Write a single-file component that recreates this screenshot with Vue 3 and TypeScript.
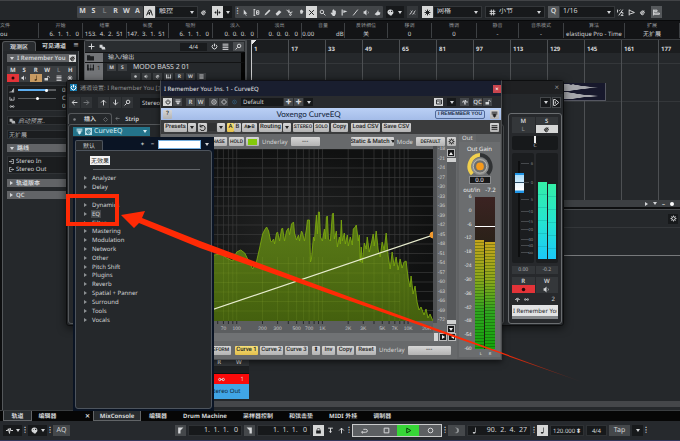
<script setup lang="ts">
import { h } from 'vue'

type IconDef = { d: string; solid?: boolean }

const icons: Record<string, IconDef> = {
  auto: { d: 'M1 11 5 2h3l3 9M3 8l6-4M6 6v4' },
  edit: { d: 'M3 7h6V5.500A3.200 3.200 0 1 0 8 9M4 7l5-4' },
  snap: { d: 'M6 1v10M1 6h3M8 6h3M3 4v4M9 4v4' },
  cursor: { d: 'M3 1v9l2-2 2 4 1-1-2-3h3z', solid: true },
  range: { d: 'M2 1v10M1 1h3M1 11h3M6 3h4v6H6zM8 5v2' },
  pen: { d: 'M1 11l1-3 7-7 2 2-7 7z', solid: true },
  erase: { d: 'M1 8l6-6 4 3-6 6H3z', solid: true },
  scissors: { d: 'M1 2l8 5M5 1v6M9 9.500a1.500 1.500 0 1 0-3 0 1.500 1.500 0 1 0 3 0M8 6l3-1' },
  glue: { d: 'M1 11l5-6M5 3l3-2 3 3-2 4H6z', solid: true },
  cross: { d: 'M2 2l8 8M10 2l-8 8' },
  zoom: { d: 'M8 5a3 3 0 1 0-6 0 3 3 0 1 0 6 0M7.500 7.500 11 11' },
  search: { d: 'M10 5a3 3 0 1 0-6 0 3 3 0 1 0 6 0M4.500 7.500 1 11' },
  hand: { d: 'M2 6l2 1V2h1V1h2v1h1v1h2v5l-2 4H5L1 7z', solid: true },
  comp: { d: 'M1 1h2v10H1zM4 2l7 2-7 3z', solid: true },
  line: { d: 'M2 11 10 1' },
  speaker: { d: 'M1 4h2l3-3v10L3 8H1zM8 4l1 2-1 2v1l2-3-2-3z', solid: true },
  hit: { d: 'M1 9l5-5 1-3 1 4 3 1-1 4-5 1zM2 3l3 3', solid: true },
  palette: { d: 'M6 1C2 1 0 4 1 7s4 2 4 4h3c0-2 3-2 3-5S9 1 6 1M4 4h1v1H4M7 3h2v2H7', solid: true },
  wave: { d: 'M1 9c3 0 3-6 5-6M6 9c3 0 3-6 5-6M3 3l1 1M9 8l1 1' },
  star: { d: 'M6 1v10M1 6h10M2.500 2.500l7 7M9.500 2.500l-7 7' },
  grid: { d: 'M4 1v10M8 1v10M1 4h10M1 8h10' },
  half: { d: 'M1 1v5M4 3l2-2M10 1 3 11M7 6h3v2L7 11h4' },
  flag: { d: 'M2 1v10M2 2l9 4-9 3' },
  bars: { d: 'M1 1v10M2 2h5v2H2zM2 7h9v2H2z' },
  rec: { d: 'M9 6a3 3 0 1 0-6 0 3 3 0 1 0 6 0', solid: true },
  note: { d: 'M7 1h1v8c0 3-5 3-5 1 0-1 2-2 4-1z', solid: true },
  lock: { d: 'M2 6h8v5H2zM3 6V4q3-5 6 0v2H8V4Q6 1 4 4v2z', solid: true },
  unlock: { d: 'M1 6h7v5H1zM6 6V4q2-5 5 0v2h-1V4Q9 2 7 4v2z', solid: true },
  list: { d: 'M1 2h10M1 5h10M1 8h10M1 11h10' },
  menu: { d: 'M1 3h10M1 6h10M1 9h10' },
  power: { d: 'M6 1v5M3.500 3A4 4 0 1 0 8.500 3' },
  bypass: { d: 'M1 2h10M1 5h10M4 5v4h4V5M6 5v6' },
  ring: { d: 'M10 6a4 4 0 1 0-8 0 4 4 0 1 0 8 0' },
  dotring: { d: 'M10.500 6a4.500 4.500 0 1 0-9 0 4.500 4.500 0 1 0 9 0M6 4v4' },
  diamond: { d: 'M6 1l5 5-5 5-5-5z' },
  plus: { d: 'M6 1v10M1 6h10' },
  left: { d: 'M11 6H2M6 2 2 6l4 4' },
  right: { d: 'M1 6h9M6 2l4 4-4 4' },
  up: { d: 'M6 11V2M2 6l4-4 4 4' },
  down: { d: 'M6 1v9M2 6l4 4 4-4' },
  folder: { d: 'M0 2h5l1 2h6v7H0z', solid: true },
  keys: { d: 'M0 1h12v10H0zM3 1v6h1v4h1V7h1V1M7 1v6h1v4h1V7h1V1', solid: true },
  group: { d: 'M1 3h5v3l4 1 1 4H5L4 8H1z', solid: true },
  gear: { d: 'M9 6a3 3 0 1 0-6 0 3 3 0 1 0 6 0M6 1v2M6 9v2M1 6h2M9 6h2M2.500 2.500l1.500 1.500M8 8l1.500 1.500M9.500 2.500 8 4M4 8 2.500 9.500' },
  loop: { d: 'M1 9h7a3 2.500 0 0 0 0-5H4M3 7 1 9l2 2' },
  square: { d: 'M2 2h8v8H2z' },
  play: { d: 'M3 2l7 4-7 4z' },
  vol: { d: 'M0 11h2V9H0zM3 11h2V7H3zM6 11h2V4H6zM9 11h2V1H9z', solid: true },
  pan: { d: 'M1 2v8h10V2M5 6v4' },
  link: { d: 'M5 6a2 2 0 1 0-4 0 2 2 0 1 0 4 0M11 6a2 2 0 1 0-4 0 2 2 0 1 0 4 0M4 6h4' },
  in: { d: 'M6 1h5v10H6M0 6h7M5 4l2 2-2 2' },
  out: { d: 'M6 1H1v10h5M4 6h7M9 4l2 2-2 2' },
  pulse: { d: 'M0 6h3l1-3 2 8 1-9 1 4h4' },
  marker: { d: 'M2 1h9L6 6v5H2z', solid: true },
  tee: { d: 'M2 2h8M6 2v8M4 8h4' },
  moon: { d: 'M3 1q9 0 7 7-3 4-8 2 5 0 5-4T3 1', solid: true },
  cam: { d: 'M1 2h10v8H1zM3 5h2M7 4l2 2-2 2' },
  undo: { d: 'M2 1v4h4M2 5a4.500 4.500 0 1 1 0 4' },
  exit: { d: 'M1 1h3l6 5-6 5H1zM4 4v4' },
}

const Icon = (props: { name: string }) => {
  const i = icons[props.name]
  return h('svg', { class: 'icon', viewBox: '0 0 12 12', 'aria-hidden': 'true' }, [
    h('path', {
      d: i.d,
      fill: i.solid ? 'currentColor' : 'none',
      stroke: i.solid ? 'none' : 'currentColor',
      'stroke-width': 1.7,
      'fill-rule': 'evenodd',
    }),
  ])
}
Icon.props = ['name']

const states = ['M', 'S', 'L', 'R', 'W', 'A']
const tools = ['cursor', 'range', 'pen', 'erase', 'scissors', 'glue', 'cross', 'zoom', 'hand', 'comp', 'line', 'speaker', 'hit']
const info = [
  ['文件', 'ou', 'start'], ['开始', '6.  1.  1.   0', 'end'], ['结束', '153.  4.  2.  51', 'end'],
  ['长度', '147.  3.  1.  51', 'end'], ['吸附', '6.  1.  1.   0', 'end'], ['淡入', '0.  0.  0.   0', 'end'],
  ['淡出', '0.  0.  0.   0', 'end'], ['音量', '0.00              dB', ''], ['反转相位', '关', ''], ['移调', '0', ''],
  ['微调', '0', ''], ['静音', '-', ''], ['音乐模式', '-', ''], ['算法', 'elastique Pro - Time', ''], ['扩展', '无扩展', ''],
]
const bars = Array.from({ length: 12 }, (_, i) => 1 + i * 16)
const categories = ['Analyzer', 'Delay', '', 'Dynamics', 'EQ', 'Filter', 'Mastering', 'Modulation', 'Network', 'Other',
  'Pitch Shift', 'Plugins', 'Reverb', 'Spatial + Panner', 'Surround', 'Tools', 'Vocals']

// Graph space: 273 x 172, log frequency on x, 3 dB rows on y
const freqX = (f: number) => 76 + 86 * Math.log10(f / 100)
const freqs = [20, 30, 40, 50, 60, 70, 80, 90, 100, 200, 300, 400, 500, 600, 700, 800, 900,
  1000, 2000, 3000, 4000, 5000, 6000, 7000, 8000, 9000, 10000, 20000]
const freqLabels = [[70, '70'], [100, '100'], [200, '200'], [300, '300'], [500, '500'], [700, '700'], [1000, '1K'],
  [2000, '2K'], [3000, '3K'], [5000, '5K'], [7000, '7K'], [10000, '10K'], [16500, '20K']] as [number, string][]
const dbs = Array.from({ length: 19 }, (_, i) => -18 - i * 3)
const spectrum = [
  [0, 110], [53, 106], [60, 105], [66, 109], [72, 112], [76, 103], [80, 101], [84, 104], [88, 112], [92, 120], [96, 112],
  [99, 99], [102, 85], [104, 81], [106, 78], [108, 82], [110, 92], [111, 93], [113, 90], [114, 95], [116, 84], [117, 83],
  [119, 92], [121, 80], [122, 79], [124, 92], [126, 82], [128, 79], [129, 86], [131, 75], [133, 73], [134, 84], [136, 91],
  [138, 86], [139, 92], [141, 82], [142, 84], [144, 92], [146, 80], [147, 71], [149, 71], [150, 113], [151, 110], [153, 88],
  [154, 92], [156, 66], [157, 85], [158, 63], [159, 63], [160, 88], [162, 92], [164, 80], [165, 90], [166, 68], [167, 67],
  [168, 90], [170, 92], [172, 65], [173, 64], [174, 90], [176, 82], [177, 98], [179, 88], [180, 95], [181, 71], [182, 92],
  [184, 84], [185, 95], [187, 86], [188, 97], [190, 88], [192, 96], [193, 80], [195, 78], [196, 76], [198, 92], [199, 86],
  [200, 113], [201, 98], [202, 114], [204, 94], [206, 100], [207, 88], [209, 103], [211, 95], [213, 85], [214, 97],
  [216, 82], [218, 101], [220, 108], [222, 93], [224, 101], [226, 84], [228, 107], [230, 120], [232, 103], [234, 117],
  [236, 108], [238, 121], [240, 110], [242, 119], [244, 113], [246, 112], [248, 129], [250, 138], [251, 127], [253, 145],
  [255, 137], [257, 153], [259, 161], [261, 158], [264, 166], [266, 160], [268, 169], [270, 165], [273, 172],
]
const spectrumLine = spectrum.map(([x, y]) => `${x},${y}`).join(' ')
const outScale = [6, 0, -6, -12, -18, -24, -30, -36, -42, -48, -54, -60]
const faderScale = [['6', 10], ['0', 29], ['5', 46], ['10', 58], ['15', 68], ['20', 76], ['30', 86], ['40', 92], ['oo', 99]] as [string, number][]
const lowerTabs = ['MixConsole', '编辑器', 'Drum Machine', '采样器控制', '和弦击垫', 'MIDI 外挂', '调制器']
</script>

<template>
  <div class="app">
    <header class="toolbar">
      <div class="cluster letters">
        <button v-for="s in states" :key="s" :class="{ dim: s === 'L' }">{{ s }}</button>
      </div>
      <div class="join">
        <button class="ib lit" aria-label="Automation"><Icon name="auto" /></button>
        <label class="pick w44"><select aria-label="Automation mode"><option>触控</option></select><i class="caret" /></label>
        <button class="ib" aria-label="Edit automation"><Icon name="edit" /></button>
      </div>
      <div class="join">
        <button class="ib lit" aria-label="Auto scroll"><Icon name="snap" /></button>
        <button class="ib dark" aria-label="Scroll options"><i class="caret" /></button>
      </div>
      <div class="cluster tools">
        <span class="dots">⋮</span>
        <button v-for="t in tools" :key="t" :class="{ lit: t === 'cross' }" :aria-label="t"><Icon :name="t" /></button>
      </div>
      <div class="join">
        <button class="ib dark" aria-label="Colour"><Icon name="palette" /></button>
        <button class="ib dark" aria-label="Colour menu"><i class="caret" /></button>
      </div>
      <button class="ib gapped" aria-label="Zero crossing"><Icon name="wave" /></button>
      <div class="join">
        <button class="ib lit" aria-label="Snap"><Icon name="star" /></button>
        <label class="pick w49"><select aria-label="Snap type"><option>网格</option></select><i class="caret" /></label>
      </div>
      <label class="pick w60"><Icon name="grid" /><select aria-label="Grid type"><option>小节</option></select><i class="caret" /></label>
      <div class="join">
        <button class="ib mid">Q</button>
        <label class="pick w56"><select aria-label="Quantize"><option>1/16</option></select><i class="caret" /></label>
        <button class="ib" aria-label="Iterative"><Icon name="half" /></button>
        <button class="ib" aria-label="Swing"><Icon name="flag" /></button>
        <button class="ib" aria-label="Quantize panel"><Icon name="edit" /></button>
      </div>
      <button class="ib mid" aria-label="Layout"><Icon name="bars" /></button>
    </header>

    <dl class="info">
      <div v-for="([k, v, a], i) in info" :key="i" :class="a"><dt>{{ k }}</dt><dd>{{ v }}</dd></div>
    </dl>

    <main class="main">
      <aside class="inspector">
        <nav class="itabs"><button class="on">观测区</button><button>可见通道</button><span>≡</span></nav>
        <div class="ibody">
          <div class="bar name"><i class="caret" /> I Remember You <Icon name="edit" /></div>
          <div class="pads">
            <button>M</button><button>S</button><button>R</button><button>W</button><button class="dim">L</button><button>H</button>
            <button class="red" aria-label="Record"><Icon name="rec" /></button><button aria-label="Monitor"><Icon name="speaker" /></button>
            <button class="tan" aria-label="Timebase"><Icon name="note" /></button><button aria-label="Lock"><Icon name="unlock" /></button>
            <button aria-label="Lanes"><Icon name="list" /></button><button aria-label="Freeze"><Icon name="star" /></button>
          </div>
          <div class="box">
            <label class="srow"><Icon name="vol" /><input type="range" value="78" class="blue" aria-label="Volume" /><span>0.00</span></label>
            <label class="srow"><Icon name="pan" /><input type="range" value="50" aria-label="Pan" /><span>C</span></label>
            <div class="srow"><Icon name="link" /><em /><span>0.00</span></div>
          </div>
          <div class="box one"><Icon name="group" /><i>启动预置..</i></div>
          <div class="box one">无扩展</div>
          <div class="bar"><i class="caret" /> 路线</div>
          <div class="box route">
            <p><Icon name="in" /> Stereo In</p>
            <p><Icon name="out" /> Stereo Out</p>
          </div>
          <div class="bar"><i class="caret side" /> 轨道版本</div>
          <div class="bar"><i class="caret side" /> QC</div>
        </div>
      </aside>

      <div class="work">
        <section class="arrange">
          <div class="tracks">
            <div class="thead">
              <button aria-label="Add track"><Icon name="plus" /></button>
              <button aria-label="Presets"><Icon name="group" /></button>
              <span class="sig">4/4</span>
              <button aria-label="History"><Icon name="power" /></button>
              <button aria-label="Agents"><Icon name="list" /></button>
              <button class="find" aria-label="Find"><Icon name="search" /></button>
            </div>
            <div class="track io"><span class="tic"><Icon name="folder" /></span><b>输入/输出</b></div>
            <div class="track">
              <span class="tic"><Icon name="keys" /><small>1</small></span>
              <div class="tmain">
                <div class="trow"><button>M</button><button>S</button><strong>MODO BASS 2 01</strong></div>
                <div class="trow second">
                  <button v-for="n in ['rec', 'speaker', 'edit', 'keys']" :key="n" :aria-label="n"><Icon :name="n" /></button>
                  <button>R</button><button>W</button><button aria-label="lanes"><Icon name="list" /></button>
                </div>
              </div>
            </div>
          </div>
          <div class="timeline">
            <div class="lanes">
              <div v-for="b in bars" :key="b" class="measure"><span>{{ b }}</span></div>
            </div>
            <svg class="clip" viewBox="0 0 42 18" aria-hidden="true">
              <rect width="42" height="18" fill="#555761" /><rect width="41" height="17" fill="#17182c" />
              <path d="M0 1h5l2 1 2-1 2 1 3 0 3 1 4 0 5 1 8 .500H41 34l-8 .500-5 1-4 0-4 1-3 0-4 1-3 0H0z" fill="#a5a6ab" />
              <path d="M0 9h4l3 1 3 0 3 1 3 0 4 1 6 0 8 1H41 34l-7 1-7 0-4 1-3 0-4 1-5 0H0z" fill="#a5a6ab" />
            </svg>
            <div class="hscroll"><i class="caret side" /><i class="caret" /><b>–</b><span class="knob" /></div>
          </div>
        </section>
        <section class="lower">
          <div class="lhead"><button aria-label="Settings"><Icon name="gear" /></button></div>
          <div class="lrule" />
          <div class="outstrip">
            <div class="rw"><span>R</span><span>W</span></div>
            <div class="blank" />
            <div class="redrow"><Icon name="link" /><span>1</span></div>
            <div class="bluerow">Stereo Out</div>
          </div>
          <div class="mscroll" />
        </section>
      </div>
    </main>

    <nav class="tabs">
      <button class="on first">轨道</button><button class="second">编辑器</button>
      <button class="close">✕</button>
      <button v-for="(t, i) in lowerTabs" :key="t" :class="{ on: i === 0 }">{{ t }}</button>
    </nav>

    <footer class="transport">
      <button class="tb dark pair" aria-label="Audio activity"><Icon name="pulse" /><i class="caret" /></button><span class="dots">⋮</span>
      <button class="tb dark pair" aria-label="MIDI activity"><Icon name="palette" /><i class="caret" /></button><span class="dots">⋮</span>
      <button class="tb aq">AQ</button>
      <button class="tb loc" aria-label="Left locator"><Icon name="marker" /></button><span class="num">1.&ensp;1.&ensp;1.&ensp; 0</span>
      <button class="tb flip" aria-label="Right locator"><Icon name="marker" /></button><span class="num">1.&ensp;1.&ensp;1.&ensp; 0</span>
      <button class="tb lit" aria-label="Lock punch"><Icon name="lock" /></button>
      <button class="tb bare" aria-label="Punch in"><Icon name="tee" /></button>
      <button class="tb bare" aria-label="Punch out"><Icon name="up" /></button><span class="dots">⋮</span>
      <div class="play">
        <button aria-label="Cycle"><Icon name="loop" /></button><button aria-label="Stop"><Icon name="square" /></button>
        <button class="go" aria-label="Play"><Icon name="play" /></button><button aria-label="Record"><Icon name="ring" /></button>
      </div><span class="dots">⋮</span>
      <button class="tb wide" aria-label="Metronome"><Icon name="moon" /></button>
      <span class="num pos"><Icon name="note" />90.&ensp;2.&ensp;4.&ensp;27</span><span class="dots">⋮</span>
      <button class="tb lit" aria-label="Tempo track"><Icon name="note" /></button>
      <span class="num tempo">120.000 <b>⬍</b></span><span class="num sig2">4/4</span>
      <button class="tb tap">Tap</button>
      <button class="tb dark" aria-label="Tap options"><i class="caret" /></button><span class="dots">⋮</span>
    </footer>

    <section class="win channel">
      <div class="ctitle"><Icon name="power" class="logo" /><span>通道设置: I Remember You [立体声]</span><button aria-label="Close">×</button></div>
      <div class="cbar">
        <button aria-label="Back"><Icon name="left" /></button><button class="dim" aria-label="Forward"><Icon name="right" /></button>
        <button class="sep" aria-label="Up"><Icon name="up" /></button><button aria-label="Down"><Icon name="down" /></button>
        <button aria-label="Search"><Icon name="search" /></button>
        <span class="route-in">Stereo In</span>
        <button class="endbtn" aria-label="Options"><i class="caret" /></button><button class="endbtn2" aria-label="Outputs"><Icon name="exit" /></button>
      </div>
      <div class="cbody">
        <div class="inserts">
          <div class="instabs"><span class="on"><Icon name="rec" />插入<Icon name="diamond" /></span><span class="st"><Icon name="left" />Strip</span></div>
          <div class="insbox">
            <div class="slot"><Icon name="bypass" /><Icon name="edit" class="chip" /><span>CurveEQ</span><i class="caret" /></div>
          </div>
        </div>
        <div class="strip">
          <div class="two"><button>M</button><button>S</button><button class="dim">L</button><button class="lit" aria-label="Edit"><Icon name="edit" /></button></div>
          <div class="panbox"><i /><span>C</span></div>
          <div class="faders">
            <div class="fbox">
              <svg viewBox="0 0 22 110" class="fsvg" aria-hidden="true">
                <rect x="6" y="8" width="2" height="96" fill="#0d0e0f" />
                <g v-for="[l, y] in faderScale" :key="l">
                  <rect x="9" :y="y" width="8" height="1" fill="#46494c" /><text x="21" :y="y + 2" text-anchor="end">{{ l }}</text>
                </g>
              </svg>
              <input type="range" value="81" aria-label="Channel volume" class="vfader" />
            </div>
            <div class="fbox meter"><i class="ml" /><i class="mr" /></div>
          </div>
          <div class="two vals"><span>0.00</span><span>-0.2</span></div>
          <div class="two"><button>R</button><button>W</button><button class="red" aria-label="Record"><Icon name="rec" /></button><button aria-label="Monitor"><Icon name="speaker" /></button></div>
          <div class="foot"><Icon name="pulse" /><Icon name="link" /><span>2</span></div>
          <input class="chname" value="I Remember You" aria-label="Channel name" />
        </div>
      </div>
    </section>

    <section class="win plugin">
      <div class="ptitle">I Remember You: Ins. 1 - CurveEQ<button aria-label="Close plug-in">×</button></div>
      <div class="pbar">
        <button class="lit" aria-label="Power"><Icon name="power" /></button><button aria-label="Bypass"><Icon name="bypass" /></button>
        <button class="sp">R</button><button>W</button><button class="sp" aria-label="Compare"><Icon name="dotring" /></button>
        <button aria-label="Copy"><Icon name="diamond" /></button><Icon name="dotring" class="blue" />
        <span class="preset">Default</span><button aria-label="Previous preset">✚</button><button aria-label="Next preset">✚</button><button class="dark" aria-label="Preset menu"><i class="caret" /></button>
        <button class="lit push" aria-label="Snapshot"><Icon name="cam" /></button><button class="dark sp" aria-label="Snapshots"><i class="caret" /></button>
        <button class="sp" aria-label="Signal"><Icon name="pulse" /></button><button class="sp">QC</button><button aria-label="Unlock"><Icon name="unlock" /></button>
      </div>
      <div class="phead">
        <button class="k">?</button><h1>Voxengo CurveEQ</h1><button class="who">I REMEMBER YOU</button><button class="k" aria-label="Routing"><Icon name="bypass" /></button>
      </div>
      <div class="prow top">
        <button class="k w23">Presets</button><button class="k w8" aria-label="Preset list"><i class="caret" /></button><button class="k w9 g" aria-label="Undo"><Icon name="undo" /></button>
        <span class="off" /><button class="k w8" aria-label="History"><i class="caret" /></button>
        <span class="ab"><button class="k yel w7">A</button><button class="k w7">B</button></span><button class="k w15 small">A▶B</button>
        <button class="k w23 g">Routing</button><button class="k w8" aria-label="Routing list"><i class="caret" /></button>
        <button class="k w21 small g">STEREO</button><button class="k w15 small">SOLO</button><button class="k w17 g">Copy</button>
        <button class="k w29 g2">Load CSV</button><button class="k w29 g">Save CSV</button>
        <button class="k w9 push" aria-label="Menu"><Icon name="menu" /></button>
      </div>
      <div class="pbody">
        <div class="eq">
          <div class="prow sub">
            <span class="eqtab">EQ</span><button class="k w15 small">AVG</button><button class="k w29 small">LIN PHASE</button><button class="k w15 small">HOLD</button>
            <button class="k w13" aria-label="Spectrum"><i class="led" /></button><span class="lab">Underlay</span><button class="k w29">---</button>
            <button class="k w43 push">Static &amp; Match<i class="caret" /></button><span class="lab">Mode</span><button class="k w29 small">DEFAULT</button><button class="k w9" aria-label="Settings"><Icon name="gear" /></button>
          </div>
          <div class="graphrow">
            <div class="plot">
              <svg class="graph" viewBox="0 0 273 172" preserveAspectRatio="none" role="img" aria-label="Spectrum">
                <defs>
                  <linearGradient id="spec" x1="0" y1="0" x2="0" y2="1"><stop offset="0" stop-color="#5c7d18" /><stop offset="1" stop-color="#44600e" /></linearGradient>
                  <radialGradient id="back"><stop offset="0" stop-color="#232424" /><stop offset="1" stop-color="#101111" /></radialGradient>
                </defs>
                <rect width="273" height="172" fill="url(#back)" />
                <g stroke="#393a3a" stroke-width=".7">
                  <line v-for="f in freqs" :key="f" :x1="freqX(f)" :x2="freqX(f)" y1="0" y2="172" />
                  <line v-for="(d, i) in dbs" :key="d" x1="0" x2="273" :y1="i * 9.5" :y2="i * 9.5" />
                </g>
                <polygon :points="`0,172 ${spectrumLine}`" fill="url(#spec)" />
                <g stroke="#9bb53a" stroke-opacity=".22" stroke-width=".7">
                  <line v-for="f in freqs.slice(5, 27)" :key="f" :x1="freqX(f)" :x2="freqX(f)" :y1="f > 5000 ? 125 : 108" y2="172" />
                  <line v-for="i in 6" :key="i" x1="0" x2="240" :y1="105 + i * 9.5" :y2="105 + i * 9.5" />
                </g>
                <polyline :points="spectrumLine" fill="none" stroke="#7ba80f" stroke-width=".9" />
                <line x1="0" y1="178" x2="273" y2="86" stroke="#e8edcf" stroke-width="1.200" />
                <path d="M273 83a3 3 0 0 0 0 6z" fill="#f29a2e" stroke="#f29a2e" />
              </svg>
              <svg class="axis" viewBox="0 0 273 12" aria-hidden="true">
                <line v-for="f in freqs" :key="f" :x1="freqX(f)" :x2="freqX(f)" y1="0" y2="3" stroke="#26282a" />
                <text v-for="[f, l] in freqLabels" :key="l" :x="freqX(f)" y="9" text-anchor="middle">{{ l }}</text>
              </svg>
            </div>
            <div class="scale"><span v-for="d in dbs" :key="d">{{ d }}</span></div>
            <div class="vs"><button aria-label="Scroll up"><i class="caret upw" /></button><b /><b class="btm" /><button aria-label="Scroll down"><i class="caret" /></button></div>
          </div>
          <div class="hs"><i /><button aria-label="Scroll right"><i class="caret side" /></button><button aria-label="Scroll left"><i class="caret back" /></button></div>
          <div class="prow bottom">
            <button class="k w29 small">FREEFORM</button><button class="k w23 yel gap">Curve 1</button><button class="k w23">Curve 2</button><button class="k w23">Curve 3</button>
            <button class="k w8 gap">⬍</button><button class="k w13">Inv</button><button class="k w17">Copy</button><button class="k w21">Reset</button>
            <span class="lab">Underlay</span><button class="k w43 push">---</button>
          </div>
        </div>
        <div class="outcol">
          <span class="outtab">Out</span>
          <div class="outbox">
            <p>Out Gain</p>
            <svg class="dial" viewBox="0 0 28 24" aria-hidden="true">
              <path d="M6 22A12 12 0 0 1 14 2" fill="none" stroke="#f1d04d" stroke-width="4" />
              <path d="M14 2a12 12 0 0 1 8 20" fill="none" stroke="#303234" stroke-width="4" />
              <circle cx="14" cy="14" r="9" fill="#8d8d8b" /><circle cx="14" cy="14" r="7" fill="#6e6e6c" stroke="#bdbdb8" />
              <circle cx="14" cy="14" r="4" fill="#f79a1c" />
            </svg>
            <output>0.0</output>
            <div class="oi"><span>out/in</span><span>-7.2</span></div>
            <div class="ometer">
              <div class="oscale"><span v-for="o in outScale" :key="o">{{ o }}</span></div>
              <div class="obars"><i class="a" /><i class="b" /><u /></div>
            </div>
            <div class="lr"><span>L</span><span>R</span></div>
          </div>
        </div>
      </div>
    </section>

    <section class="win menu">
      <div class="mhead">
        <button class="mtab">默认</button>
        <button class="sym">+</button><button class="sym">−</button><input type="text" aria-label="Search plug-ins" /><button class="sym" aria-label="Collections"><i class="caret" /></button>
      </div>
      <div class="mbody">
        <button class="none">无效果</button>
        <hr />
        <ul>
          <li v-for="(c, i) in categories" :key="i" :class="{ hot: c === 'EQ' }"><template v-if="c"><i class="caret side" /><span>{{ c }}</span></template></li>
        </ul>
      </div>
    </section>

    <svg class="mark" viewBox="0 0 680 441" aria-hidden="true">
      <defs><linearGradient id="tail" gradientUnits="userSpaceOnUse" x1="500" x2="582" y1="350" y2="382"><stop offset="0" stop-color="#ff2a05" /><stop offset="1" stop-color="#ff2a05" stop-opacity=".1" /></linearGradient></defs>
      <rect x="68" y="196" width="49" height="28" fill="none" stroke="#ff2a05" stroke-width="4" />
      <path d="M121 215 145 211 142 218 200 241 350 297 582 382 350 301 200 248 139 223 134 228z" fill="url(#tail)" />
    </svg>
  </div>
</template>

<style>
body {
  margin: 0;
  background: #24272a;
}
</style>

<style scoped>
.app, .app * { box-sizing: border-box; }
.app {
  position: relative;
  display: flex;
  flex-direction: column;
  min-height: 100vh;
  overflow: hidden;
  background: #24272a;
  color: #d4d6d8;
  font: 6px/8px "Noto Sans", "Noto Sans CJK SC", sans-serif;
  text-rendering: geometricPrecision;
}
button, input, select {
  margin: 0;
  padding: 0;
  border: 0;
  border-radius: 0;
  background: none;
  color: inherit;
  font: inherit;
  text-rendering: inherit;
  min-width: 0;
  outline: none;
}
button { display: flex; align-items: center; justify-content: center; white-space: nowrap; }
p, dl, dd, ul, h1 { margin: 0; padding: 0; }
.icon { width: 7px; height: 7px; flex: none; }
.caret {
  width: 0;
  height: 0;
  flex: none;
  border: 2px solid transparent;
  border-top: 3px solid currentColor;
  border-bottom: 0;
}
.caret.side { border: 2px solid transparent; border-left: 3px solid currentColor; border-right: 0; }
.caret.back { border: 2px solid transparent; border-right: 3px solid currentColor; border-left: 0; }
.caret.upw { border: 2px solid transparent; border-bottom: 3px solid currentColor; border-top: 0; }
.dim { color: #75787b; }
.lit { background: #d6d7d7; color: #1d1f21; }

.toolbar {
  display: flex;
  gap: 3px;
  height: 20px;
  padding: 3px 0 0 77px;
  border-top: 1px solid #414346;
  align-items: center;
}
.toolbar > * { flex: none; height: 12px; }
.cluster { display: flex; background: #424548; border-radius: 1px; }
.letters { margin-right: -2px; }
.letters button { width: 11px; font-weight: 700; font-size: 7px; }
.join { display: flex; }
.join > * { height: 12px; }
.ib { width: 11px; }
.ib.dark { background: #17191b; width: 9px; }
.ib.mid { background: #55585b; font-size: 7px; font-weight: 600; }
.pick { display: flex; align-items: center; gap: 3px; padding: 0 3px; background: #17191b; border: 1px solid #34373a; }
.pick select { flex: 1; appearance: none; height: 10px; font-size: 7px; }
.w44 { width: 43px; }
.w49 { width: 49px; }
.w60 { width: 60px; }
.w56 { width: 56px; }
.tools button { width: 11px; }
.tools .dots { width: 5px; }
.dots { display: flex; align-items: center; justify-content: center; font-weight: 700; font-size: 7px; }
.gapped { background: #34373a; margin-right: 1px; }

.info {
  display: grid;
  grid-template-columns: 39fr 44fr 44fr 42fr 44fr 45fr 44fr 43fr 43fr 44fr 45fr 42fr 45fr 61fr 55fr;
  height: 20px;
  background: #131416;
  border-top: 1px solid #08090a;
  border-bottom: 1px solid #3a3d40;
  text-align: center;
  white-space: pre;
  overflow: hidden;
}
.info > div { margin: 2px 0; border-right: 1px solid #3d4043; display: grid; grid-template-rows: 7px 8px; min-width: 0; }
.info dt { color: #96999c; font-size: 5px; line-height: 7px; }
.info .end dd { text-align: right; padding-right: 3px; }
.info .start dt { text-align: left; }
.info .start dd { text-align: left; }

.main { display: flex; flex: 1; min-height: 0; }
.inspector { flex: 0 0 84px; display: flex; flex-direction: column; padding: 1px 5px 0 2px; background: #0d0e0f; }
.itabs { display: flex; height: 10px; font-size: 6px; align-items: stretch; font-weight: 600; }
.itabs .on { width: 34px; background: #282b2e; border: 1px solid #54575a; border-bottom: 0; border-radius: 3px 3px 0 0; }
.itabs button { width: 36px; }
.itabs span { margin-left: auto; }
.ibody { flex: 1; display: flex; flex-direction: column; padding: 3px 2px 0 4px; background: #25282b; border-left: 1px solid #54575a; border-right: 1px solid #54575a; white-space: nowrap; }
.bar { display: flex; align-items: center; gap: 3px; height: 8px; padding: 0 3px; background: #626467; font-weight: 600; margin-bottom: 4px; }
.name { padding-right: 0; }
.name .icon { margin-left: auto; background: #d6d7d7; color: #222; }
.pads { display: grid; grid-template-columns: repeat(6, 1fr); grid-auto-rows: 8px; background: #3b3e41; font-weight: 700; margin-bottom: 3px; }
.pads .icon { width: 6px; height: 6px; }
.red { background: #e33338; color: #25080a; }
.tan { background: #c79a62; color: #35230e; }
.box { background: #1b1d1f; border: 1px solid #303336; padding: 0 1px; margin-bottom: 5px; }
.box.one { display: flex; align-items: center; gap: 2px; height: 9px; color: #b3b5b7; }
.srow { display: flex; align-items: center; gap: 3px; height: 8px; }
.srow .icon { width: 6px; height: 5px; }
.srow input, .srow em { width: 38px; flex: none; height: 6px; }
.srow input { appearance: none; background: linear-gradient(#5b5e61, #5b5e61) center / 100% 1px no-repeat; }
.srow input.blue { background: linear-gradient(90deg, #5eaef0 78%, #5b5e61 0) center / 100% 2px no-repeat; }
.srow input::-webkit-slider-thumb { appearance: none; width: 3px; height: 3px; border-radius: 50%; background: #fff; }
.srow span { margin-left: 3px; overflow: hidden; }
.route p { display: flex; align-items: center; gap: 2px; }
.route .icon { width: 5px; height: 5px; }

.work { flex: 1; display: flex; flex-direction: column; min-width: 0; }
.arrange { display: flex; height: 169px; flex: none; border-bottom: 2px solid #0e0f10; }
.tracks { flex: 0 0 163px; border: 1px solid #54575a; border-right: 2px solid #4a4d50; border-radius: 3px 0 0 0; background: #25282b; }
.thead { display: flex; align-items: center; gap: 4px; height: 11px; padding: 0 1px 0 3px; background: #2a2d30; }
.thead .sig { margin-left: auto; width: 27px; text-align: center; background: #191b1d; font-size: 6px; }
.thead .find { background: #4a4d50; width: 11px; height: 9px; }
.track { display: flex; border-right: 4px solid #050505; background: #25282b; border-top: 1px solid #121314; min-height: 9px; }
.track b { font-weight: 400; margin-left: 5px; }
.tic { width: 18px; background: #737578; color: #1d1f21; display: flex; gap: 3px; padding: 1px 2px; }
.tic small { font-size: 6px; }
.tmain { flex: 1; }
.trow { display: flex; align-items: center; gap: 2px; padding-left: 4px; height: 9px; }
.trow button { width: 9px; height: 7px; background: #3b3e41; font-size: 5px; font-weight: 700; }
.trow strong { margin-left: 4px; font-weight: 400; font-size: 7px; }
.trow.second { padding-left: 28px; }
.trow .icon { width: 5px; height: 5px; }
.timeline { flex: 1; min-width: 0; display: flex; flex-direction: column; position: relative; background: #25282b; padding-left: 4px; }
.lanes { flex: 1; display: flex; overflow: hidden; background: linear-gradient(#1b1d1f 13px, transparent 13px), linear-gradient(transparent 23px, #34373a 23px, #34373a 24px, transparent 24px, transparent 61px, #34373a 61px, #34373a 62px, transparent 62px); }
.measure { flex: 0 0 37px; border-left: 1px solid #4d5053; padding: 5px 0 0 2px; font-weight: 700; font-size: 6px; }
.measure:first-child { border-color: #c8c9ca; background: linear-gradient(135deg, #e8e8e8 3px, transparent 3px); }
.clip { position: absolute; left: 317px; top: 43px; width: 42px; height: 18px; }
.hscroll { height: 7px; background: #3c3f42; display: flex; gap: 5px; align-items: center; justify-content: flex-end; padding-right: 6px; }
.knob { width: 4px; height: 4px; border-radius: 50%; background: #fff; }
.lower { flex: 1; display: flex; flex-direction: column; background: #25282b; border-top: 1px solid #4a4d50; }
.lhead { height: 18px; display: flex; align-items: center; justify-content: flex-end; padding-right: 2px; border-bottom: 1px solid #34373a; }
.lhead button { width: 10px; height: 10px; background: #17191b; }
.lrule { height: 28px; border-bottom: 1px solid #77797b; }
.outstrip { margin-top: auto; margin-left: 114px; width: 51px; }
.rw { display: flex; justify-content: space-around; padding-left: 12px; font-weight: 600; background: #34373a; }
.blank { height: 8px; background: #1e2022; border-bottom: 1px solid #111; }
.redrow { height: 10px; background: #fb0a0a; display: flex; align-items: center; justify-content: space-between; padding: 0 5px 0 20px; }
.bluerow { height: 15px; background: #40a5e6; color: #102433; padding: 3px 0 0 12px; white-space: nowrap; }
.mscroll { height: 6px; margin: 2px 0 3px; background: #45474a; }

.tabs { display: flex; height: 11px; flex: none; background: #060606; border-top: 1px solid #3a3d40; padding-left: 3px; font-weight: 700; font-size: 6px; }
.tabs button { padding: 0 8px; }
.tabs .on { background: #282c2f; border: 1px solid #616467; border-top: 0; width: 48px; padding: 0; }
.tabs .first { width: 29px; }
.tabs .second { width: 31px; margin-right: 19px; }
.tabs .close { width: 11px; padding: 0; }
.transport { display: flex; align-items: center; height: 20px; flex: none; padding-left: 3px; gap: 2px; background: #26292d; border-bottom: 1px solid #34375c; font-size: 7px; }
.tb { width: 11px; height: 11px; background: #45484b; flex: none; }
.tb.dark { background: #17191b; }
.tb.pair { width: 19px; gap: 3px; }
.tb.lit { background: #d6d7d7; }
.tb.bare { background: none; width: 9px; }
.tb.aq { width: 17px; margin-right: 103px; }
.tb.wide { width: 17px; color: #909396; }
.tb.tap { width: 21px; }
.flip { transform: scaleX(-1); }
.num { height: 11px; width: 54px; background: #17191b; border: 1px solid #2e3134; display: flex; align-items: center; justify-content: flex-end; padding: 0 3px; white-space: nowrap; }
.num.pos { width: 64px; justify-content: space-between; }
.num.tempo { width: 34px; font-size: 6px; justify-content: space-between; padding: 0 2px; }
.num.sig2 { width: 21px; justify-content: center; font-size: 6px; }
.transport .dots { width: 2px; }
.play { display: flex; border: 1px solid #c9cacb; height: 13px; background: #5c5f62; }
.play button { width: 22px; }
.play .go { background: #37d637; color: #0c3a0c; }

.win { position: absolute; }
.channel { left: 66px; top: 80px; width: 498px; height: 246px; border: 1px solid #0d0e0f; border-radius: 3px; background: #25282b; box-shadow: 0 2px 8px #0009; display: flex; flex-direction: column; }
.ctitle { display: flex; align-items: center; gap: 3px; height: 13px; padding: 0 4px 0 3px; background: #1f2022; color: #8f9193; white-space: nowrap; }
.ctitle span { width: 80px; overflow: hidden; }
.ctitle .logo { background: #1379ad; color: #fff; }
.ctitle button { margin-left: auto; font-size: 8px; }
.cbar { display: flex; align-items: center; height: 17px; padding: 0 2px; gap: 1px; }
.cbar button { width: 11px; height: 11px; background: #313437; }
.cbar .sep { margin-left: 5px; }
.cbar .route-in { margin-left: 6px; width: 40px; padding: 1px 2px; background: #16181a; }
.cbar .endbtn { margin-left: auto; background: #16181a; border: 1px solid #44474a; }
.cbar .endbtn2 { background: #16181a; border: 1px solid #44474a; width: 9px; }
.cbody { flex: 1; display: flex; justify-content: space-between; padding: 2px 1px 1px; }
.inserts { flex: 1; margin-right: 4px; display: flex; flex-direction: column; }
.instabs { display: flex; height: 11px; font-weight: 600; }
.instabs span { display: flex; align-items: center; justify-content: space-between; width: 44px; padding: 0 3px; }
.instabs .st { width: 30px; }
.instabs .on { border: 1px solid #54575a; border-bottom: 0; border-radius: 3px 3px 0 0; }
.instabs .icon { width: 5px; height: 5px; color: #7e8184; }
.insbox { flex: 1; border: 1px solid #54575a; border-radius: 3px; padding: 2px 4px; }
.slot { display: flex; align-items: center; gap: 2px; width: 77px; height: 9px; padding: 0 3px; background: #24748b; color: #d9eef4; font-size: 7px; }
.slot .chip { background: #b9dbe4; color: #24748b; }
.slot .caret { margin-left: auto; }
.strip { width: 54px; border: 1px solid #6a6d70; border-radius: 3px; padding: 3px 3px 2px; display: flex; flex-direction: column; gap: 3px; background: #27292c; }
.two { display: grid; grid-template-columns: 1fr 1fr; grid-auto-rows: 8px; font-weight: 600; gap: 0 1px; }
.two button, .two span { background: #34373a; text-align: center; }
.two .lit { background: #d6d7d7; color: #222; }
.two .red { background: #e33338; color: #25080a; }
.panbox { height: 14px; background: #17191b; border-radius: 2px; display: flex; flex-direction: column; align-items: center; font-size: 5px; line-height: 6px; }
.panbox i { width: 2px; height: 7px; background: #eee; }
.faders { display: grid; grid-template-columns: 1fr 1fr; gap: 2px; height: 110px; }
.fbox { background: #1b1d1f; border-radius: 2px; position: relative; display: flex; }
.fsvg { width: 22px; height: 110px; }
.fsvg text { font-size: 4px; fill: #85888b; }
.vfader { position: absolute; left: 2px; top: 4px; width: 10px; height: 102px; appearance: none; writing-mode: vertical-lr; direction: rtl; }
.vfader::-webkit-slider-thumb { appearance: none; width: 9px; height: 20px; background: linear-gradient(#1f95e6 2px, #a9dcfa 2px, #cdeafb 9px, #2a4c66 9px, #2a4c66 10px, #e8f5fd 10px, #fff 17px, #1f95e6 18px); }
.meter { align-items: flex-end; gap: 1px; padding: 0 2px 4px; }
.meter i { flex: 1; background: repeating-linear-gradient(transparent 0 12px, #0a7f8040 12px 13px), linear-gradient(#34eea6, #25e5d0 50%, #1bc8f8); }
.ml { height: 77px; }
.mr { height: 75px; }
.vals { font-weight: 400; font-size: 5px; color: #aeb0b2; }
.foot { display: flex; gap: 4px; align-items: center; padding: 0 3px; height: 6px; }
.foot .icon { width: 5px; height: 5px; }
.foot span { margin-left: auto; }
.chname { height: 14px; width: 100%; padding: 0 1px; background: #e2e3e4; color: #1b1d1f; border-bottom: 3px solid #85888b; }

.plugin { left: 160px; top: 80px; width: 342px; height: 280px; display: flex; flex-direction: column; background: #626466; border: 1px solid #4b4d4f; border-top-color: #101117; box-shadow: 0 2px 6px #0009; }
.ptitle { display: flex; align-items: center; justify-content: space-between; height: 15px; padding: 0 0 0 3px; background: #191e2f; color: #e6e7ea; }
.ptitle button { width: 8px; height: 8px; background: #c9454e; color: #fff; }
.pbar { display: flex; align-items: center; gap: 1px; height: 12px; padding: 0 9px 0 2px; background: #292b2e; }
.pbar button { width: 9px; height: 8px; background: #45484b; font-weight: 600; }
.pbar .lit { background: #d6d7d7; }
.pbar .dark { background: #17191b; }
.pbar .sp { margin-left: 3px; }
.pbar .icon { width: 6px; height: 6px; }
.pbar .blue { color: #335f80; margin: 0 3px; width: 5px; }
.preset { width: 42px; background: #17191b; padding-left: 2px; }
.pbar .push { margin-left: auto; }
.phead { display: flex; align-items: center; height: 12px; padding: 0 2px; background: linear-gradient(#bad0f5, #a4bce8); color: #23304a; }
.phead h1 { flex: 1; text-align: center; font: 500 8px/12px Lato, "Noto Sans", sans-serif; padding-left: 10px; }
.phead .who { width: 50px; height: 9px; border: 1px solid #506a9a; border-radius: 2px; font: 700 5px/6px "Liberation Sans", sans-serif; margin-right: 5px; }
.phead .k { width: 9px; height: 9px; }
.k { height: 9px; background: linear-gradient(#d6d6d6, #b3b3b3); color: #222; border-radius: 1px; font: 500 6px/8px Roboto, "Liberation Sans", sans-serif; overflow: hidden; }
.k.small { font-size: 5px; font-weight: 500; }
.yel { background: linear-gradient(#f6e07a, #e3c04d); }
.w7 { width: 7px; }
.w8 { width: 8px; }
.w9 { width: 9px; }
.w13 { width: 13px; }
.w15 { width: 15px; }
.w17 { width: 17px; }
.w21 { width: 20px; }
.w23 { width: 23px; }
.w29 { width: 29px; }
.w43 { width: 43px; gap: 1px; }
.prow { display: flex; align-items: center; gap: 2px; flex: none; }
.prow > * { flex: none; }
.prow .push { margin-left: auto; }
.prow.top { height: 14px; padding: 0 2px 0 3px; background: #3b3c3d; gap: 1px; }
.prow .g { margin-left: 1px; }
.prow .g2 { margin-left: 2px; }
.off { width: 8px; height: 8px; background: #303132; }
.ab { display: flex; margin: 0 0 0 1px; }
.lab { color: #d5d6d6; padding: 0 1px; font-size: 6px; }
.pbody { flex: 1; display: flex; gap: 2px; padding-right: 1px; min-height: 0; }
.eq { flex: 1; min-width: 0; display: flex; flex-direction: column; background: #67696b; }
.prow.sub { height: 15px; padding: 0 1px 0 5px; gap: 2px; }
.eqtab { width: 13px; color: #ddd; }
.led { width: 9px; height: 6px; background: #83c90a; }
.graphrow { display: flex; height: 184px; }
.plot { flex: 1; min-width: 0; display: flex; flex-direction: column; }
.graph { width: 100%; height: 172px; display: block; }
.axis { width: 100%; height: 12px; display: block; background: #5c5e60; }
.axis text { font: 5px "Liberation Sans", sans-serif; fill: #c4c5c6; }
.scale { width: 14px; height: 177px; margin-top: -3px; display: flex; flex-direction: column; justify-content: space-between; font: 5px/6px "Liberation Sans", sans-serif; text-align: right; padding-right: 2px; color: #d3d3d3; background: linear-gradient(90deg, #4e5052 4px, transparent 4px); }
.vs { width: 9px; margin-right: 1px; display: flex; flex-direction: column; background: #56585a; }
.vs button, .hs button { width: 8px; height: 8px; background: #171819; border: 1px solid #b8b9ba; color: #eee; }
.vs b { height: 4px; background: #cfd0d0; margin-top: 1px; }
.vs .btm { margin: auto 0 1px; }
.hs { display: flex; justify-content: flex-end; height: 8px; background: #707274; gap: 1px; padding-right: 1px; }
.hs > i { width: 4px; background: #d5d6d6; }
.prow.bottom { flex: 1; padding: 0 11px 0 41px; gap: 2px; }
.prow .gap { margin-left: 2px; }
.outcol { width: 41px; display: flex; flex-direction: column; background: #626466; padding-bottom: 2px; }
.outtab { background: #67696b; color: #ddd; padding-left: 3px; width: 17px; height: 9px; }
.outbox { flex: 1; background: #6b6d6f; display: flex; flex-direction: column; align-items: center; color: #eee; padding-top: 3px; }
.dial { width: 28px; height: 23px; }
.outbox output { width: 22px; height: 8px; background: #171819; text-align: center; border: 1px solid #8a8c8e; line-height: 6px; }
.oi { display: flex; gap: 5px; margin: 2px 0 1px; }
.ometer { display: flex; gap: 3px; height: 157px; }
.oscale { display: flex; flex-direction: column; justify-content: space-between; text-align: right; font: 5px/5px "Liberation Sans", sans-serif; }
.obars { margin: 2px 0 3px; width: 20px; background: linear-gradient(#3b2322, #2a2118 30%, #17200f); display: grid; grid-template-columns: 1fr 1fr; gap: 1px; align-items: end; position: relative; }
.obars i { background: repeating-linear-gradient(transparent 0 2px, #0a300055 2px 3px), linear-gradient(#c6a41c, #8ea71b 35%, #2fa51f 65%, #15a50c); }
.obars .a { height: 109px; }
.obars .b { height: 107px; }
.obars u { position: absolute; left: 0; right: 0; top: 29px; height: 1px; background: #fff; }
.lr { display: flex; gap: 7px; font-size: 4px; line-height: 5px; padding-left: 12px; }

.menu { left: 73px; top: 137px; width: 141px; height: 274px; padding: 3px 2px 2px; background: #0a1424; display: flex; flex-direction: column; }
.mhead { display: flex; align-items: flex-start; height: 10px; padding-right: 1px; gap: 1px; }
.mtab { width: 28px; height: 10px; background: #25282b; border: 1px solid #4d545d; border-bottom: 0; border-radius: 2px 2px 0 0; margin-right: auto; }
.sym { width: 9px; height: 8px; font-weight: 700; }
.mhead input { width: 43px; height: 9px; background: #fff; border: 1px solid #74aede; color: #222; }
.mbody { flex: 1; border: 1px solid #4d545d; border-radius: 0 3px 3px 3px; background: #25282b; padding: 5px 11px 0 8px; }
.none { background: #f2f2f2; color: #222; width: 20px; height: 9px; margin-left: 6px; }
.mbody hr { margin: 4px 0 4px 9px; border: 0; border-top: 1px solid #63676b; }
.mbody ul { list-style: none; display: grid; height: 150px; grid-template-rows: repeat(17, 1fr); }
.mbody li { display: flex; align-items: center; gap: 4px; }
.mbody li .caret { color: #8c9093; }
.mbody li span { padding: 0 1px; line-height: 8px; }
.hot span { background: #45494c; }
.mark { position: absolute; left: 0; top: 0; width: 680px; height: 441px; pointer-events: none; }
</style>
